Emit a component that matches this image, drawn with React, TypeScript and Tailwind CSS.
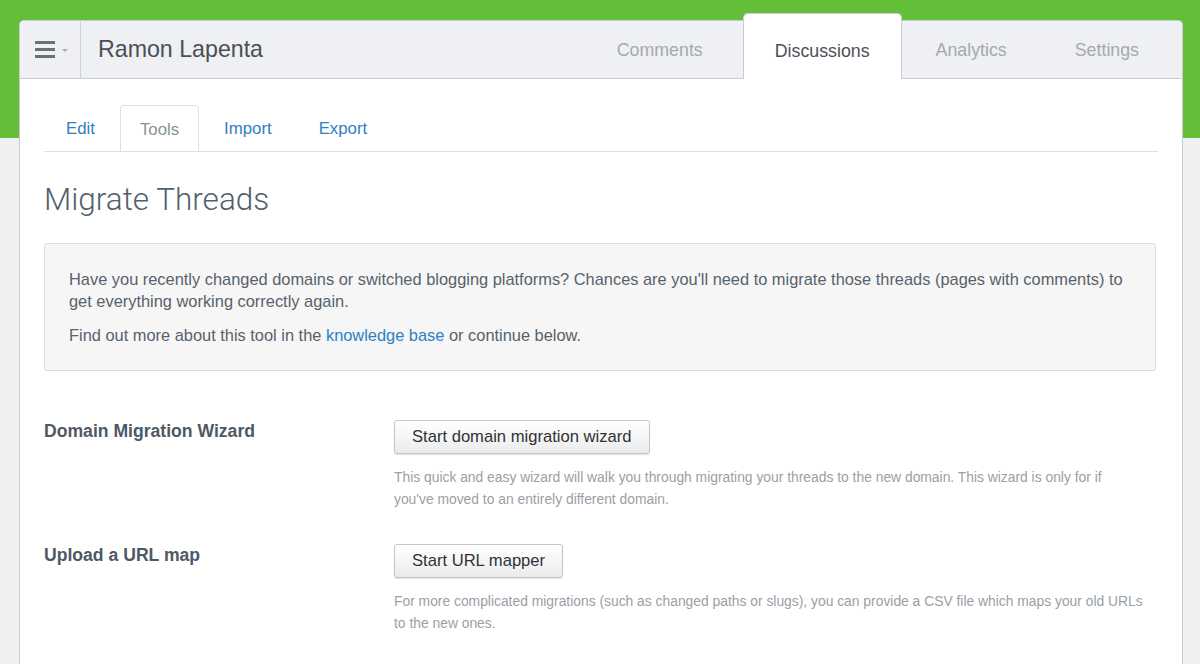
import React from "react";

const font = { fontFamily: '"Liberation Sans", Arial, Helvetica, sans-serif' };

function Hamburger() {
  return (
    <div className="flex w-[61px] items-center border-r border-[#cfd2d6] pl-[15px]">
      <div className="flex flex-col gap-[3.5px]">
        <div className="h-[3.5px] w-[20px] bg-[#6b7076]" />
        <div className="h-[3.5px] w-[20px] bg-[#6b7076]" />
        <div className="h-[3.5px] w-[20px] bg-[#6b7076]" />
      </div>
      <div className="ml-[7px] mt-[1px] h-0 w-0 border-x-[3px] border-t-[3px] border-x-transparent border-t-[#a9adb2]" />
    </div>
  );
}

function ActiveTopTab({ label }: { label: string }) {
  return (
    <div className="-mb-px -mt-[8px] flex items-center rounded-t-[5px] border-x border-t border-[#c9ccd0] bg-white px-[31px] pt-[10px] text-[17.8px] text-[#4b5057]">
      {label}
    </div>
  );
}

function SubTab({ label, active }: { label: string; active?: boolean }) {
  if (active) {
    return (
      <div className="-mb-px mr-[3px] flex h-[46px] items-center rounded-t-[4px] border-x border-t border-[#dcdfe3] bg-white px-[19px] pt-[2px] text-[16.8px] text-[#8a9299]">
        {label}
      </div>
    );
  }
  return (
    <div className="mr-[3px] flex h-[46px] items-center px-[22px] pt-[2px] text-[16.8px] text-[#2f80c2]">{label}</div>
  );
}

function Row({
  label,
  button,
  desc,
}: {
  label: string;
  button: string;
  desc: string;
}) {
  return (
    <div className="flex">
      <div className="w-[350px] shrink-0 text-[17.6px] font-bold leading-[22px] text-[#4e5964]">{label}</div>
      <div className="flex-1 pr-[13px]">
        <button className="h-[34px] rounded-[3px] border border-[#c3c5c8] bg-[linear-gradient(#ffffff,#ebebeb)] px-[17px] text-[16.6px] text-[#2f3236] shadow-[0_1px_1px_rgba(0,0,0,0.12)]">
          {button}
        </button>
        <p className="mt-[12px] text-[13.85px] leading-[22px] text-[#9aa0a6]">{desc}</p>
      </div>
    </div>
  );
}

export default function App() {
  return (
    <div
      className="min-h-[664px] bg-[linear-gradient(#63bf37_0,#63bf37_138px,#eff0f1_138px)] pt-[20px]"
      style={font}
    >
      <div className="ml-[19px] min-h-[644px] w-[1164px] rounded-t-[5px] border border-b-0 border-[#c9ccd0] bg-white">
        <div className="flex h-[58px] rounded-t-[5px] border-b border-[#c9ccd0] bg-[#eef0f4]">
          <Hamburger />
          <div className="flex flex-1 items-center pl-[17px] text-[23.2px] text-[#4a4f55]">Ramon Lapenta</div>
          <div className="flex pr-[9px] text-[17.8px] text-[#a5a9ae]">
            <div className="flex items-center pl-[34px] pr-[40px] pt-[2px]">Comments</div>
            <ActiveTopTab label="Discussions" />
            <div className="flex items-center px-[34px] pt-[2px]">Analytics</div>
            <div className="flex items-center px-[34px] pt-[2px]">Settings</div>
          </div>
        </div>

        <div className="px-[24px] pt-[26px]">
          <div className="flex border-b border-[#dcdfe3]">
            <SubTab label="Edit" />
            <SubTab label="Tools" active />
            <SubTab label="Import" />
            <SubTab label="Export" />
          </div>

          <h1
            className="mt-[30px] h-[36px] text-[31.5px] font-light leading-[36px] text-[#535f6b]"
            style={{ fontFamily: '"Roboto", "Liberation Sans", sans-serif' }}
          >
            Migrate Threads
          </h1>

          <div className="mr-[2px] mt-[25px] rounded-[3px] border border-[#dadcdf] bg-[#f6f6f6] px-[24px] pb-[24px] pt-[24px] text-[16.4px] leading-[22px] text-[#57626c]">
            <p>
              Have you recently changed domains or switched blogging platforms? Chances are you'll need to migrate those
              threads (pages with comments) to get everything working correctly again.
            </p>
            <p className="mt-[12px]">
              Find out more about this tool in the <span className="text-[#2f80c2]">knowledge base</span> or continue
              below.
            </p>
          </div>

          <div className="mt-[49px] flex flex-col gap-[34px]">
            <Row
              label="Domain Migration Wizard"
              button="Start domain migration wizard"
              desc="This quick and easy wizard will walk you through migrating your threads to the new domain. This wizard is only for if you've moved to an entirely different domain."
            />
            <Row
              label="Upload a URL map"
              button="Start URL mapper"
              desc="For more complicated migrations (such as changed paths or slugs), you can provide a CSV file which maps your old URLs to the new ones."
            />
          </div>
        </div>
      </div>
    </div>
  );
}
